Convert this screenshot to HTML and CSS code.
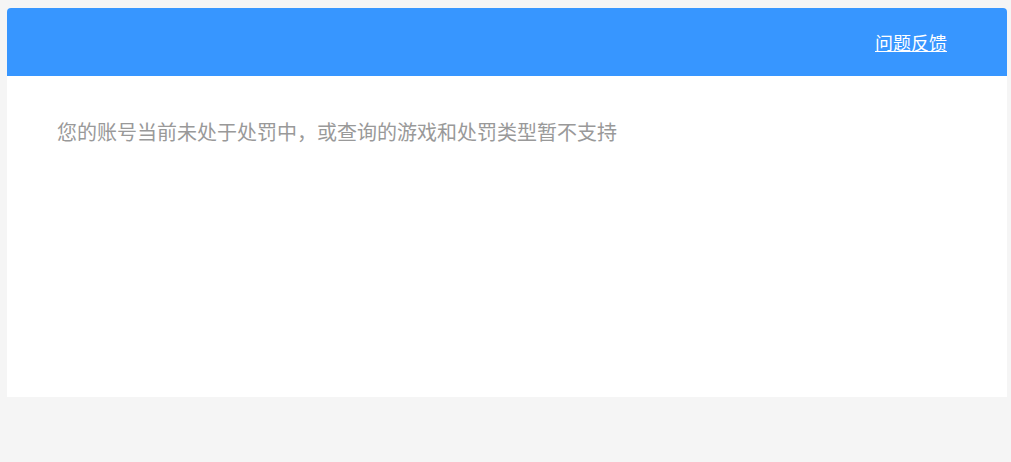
FILE: index.html
```html
<!DOCTYPE html>
<html>
<head>
    <meta charset="utf-8">
    <meta name="viewport" content="width=device-width, initial-scale=1">
    <title>处罚查询</title>
    <link rel="stylesheet" href="styles.css">
</head>
<body>
    <div class="card">
        <div class="card-head">
            <a class="feedback" href="#">问题反馈</a>
        </div>
        <div class="card-body">
            <p class="tip">您的账号当前未处于处罚中，或查询的游戏和处罚类型暂不支持</p>
        </div>
    </div>
</body>
</html>
```
FILE: styles.css
```css
*
{
    margin: 0;
    padding: 0;
    box-sizing: border-box;
}
body
{
    background-color: #f5f5f5;
    font-family: "Liberation Sans", "Noto Sans CJK SC", sans-serif;
    padding: 8px 4px 0 7px;
}
.card
{
    width: 1000px;
    background-color: #fff;
    border-radius: 4px 4px 0 0;
    overflow: hidden;
}
.card-head
{
    height: 68px;
    background-color: #3796ff;
    display: flex;
    align-items: center;
    justify-content: flex-end;
    padding-right: 60px;
}
.feedback
{
    color: #fff;
    font-size: 18px;
    text-decoration: underline;
}
.card-body
{
    height: 321px;
    padding: 45px 50px;
}
.tip
{
    color: #999;
    font-size: 20px;
    line-height: 24px;
}
```
